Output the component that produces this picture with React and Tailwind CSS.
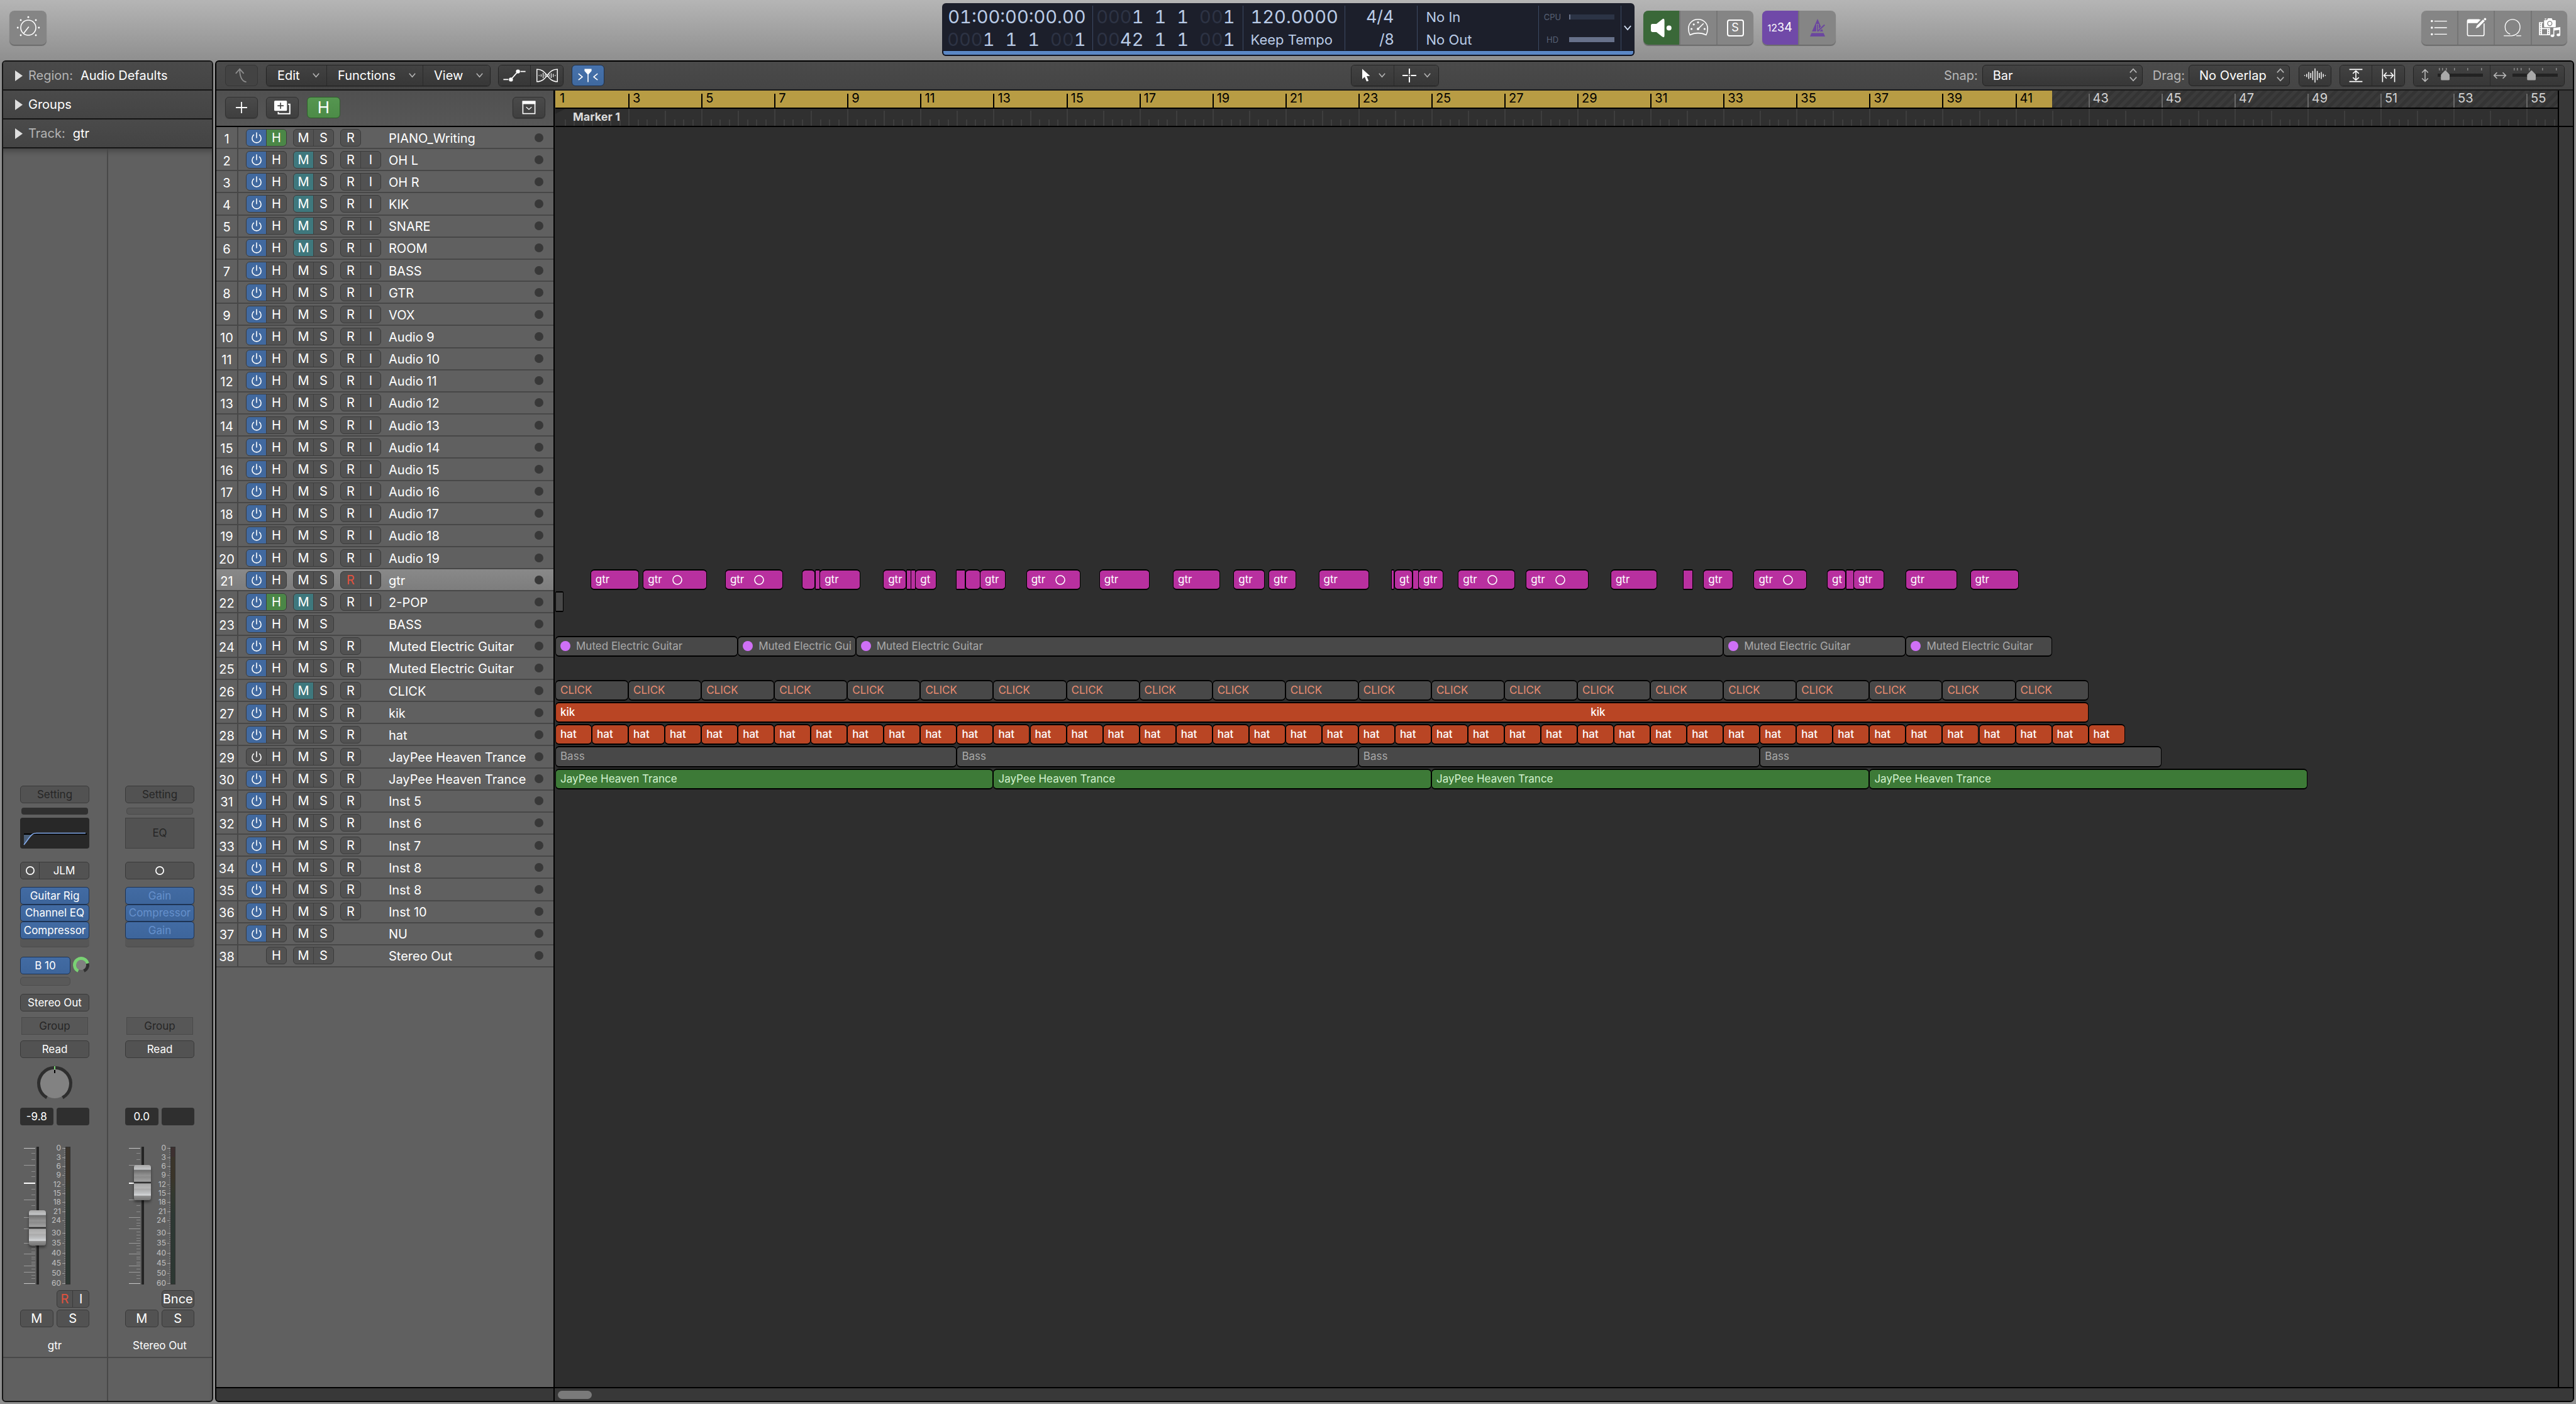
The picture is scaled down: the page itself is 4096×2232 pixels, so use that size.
import React from "react";

/* ---------- session data ---------- */

const BARS_VISIBLE = 54.86;
const pct = (bars) => `${(bars / BARS_VISIBLE) * 100}%`;

const tracks = [
  { name: "PIANO_Writing", hide: true, rec: true },
  { name: "OH L", mute: true, rec: true, input: true },
  { name: "OH R", mute: true, rec: true, input: true },
  { name: "KIK", mute: true, rec: true, input: true },
  { name: "SNARE", mute: true, rec: true, input: true },
  { name: "ROOM", mute: true, rec: true, input: true },
  { name: "BASS", rec: true, input: true },
  { name: "GTR", rec: true, input: true },
  { name: "VOX", rec: true, input: true },
  { name: "Audio 9", rec: true, input: true },
  { name: "Audio 10", rec: true, input: true },
  { name: "Audio 11", rec: true, input: true },
  { name: "Audio 12", rec: true, input: true },
  { name: "Audio 13", rec: true, input: true },
  { name: "Audio 14", rec: true, input: true },
  { name: "Audio 15", rec: true, input: true },
  { name: "Audio 16", rec: true, input: true },
  { name: "Audio 17", rec: true, input: true },
  { name: "Audio 18", rec: true, input: true },
  { name: "Audio 19", rec: true, input: true },
  { name: "gtr", rec: true, input: true, armed: true, selected: true },
  { name: "2-POP", hide: true, mute: true, rec: true, input: true },
  { name: "BASS" },
  { name: "Muted Electric Guitar", rec: true },
  { name: "Muted Electric Guitar", rec: true },
  { name: "CLICK", mute: true, rec: true },
  { name: "kik", rec: true },
  { name: "hat", rec: true },
  { name: "JayPee Heaven Trance", rec: true, power: "off" },
  { name: "JayPee Heaven Trance", rec: true },
  { name: "Inst 5", rec: true },
  { name: "Inst 6", rec: true },
  { name: "Inst 7", rec: true },
  { name: "Inst 8", rec: true },
  { name: "Inst 8", rec: true },
  { name: "Inst 10", rec: true },
  { name: "NU" },
  { name: "Stereo Out", power: "none" },
];

/* [start, end, label, stereo] with positions counted in bars from bar 1 */
const gtrRegions = [
  [0.96, 2.3, "gtr"], [2.4, 4.155, "gtr", true], [4.65, 6.24, "gtr", true],
  [6.75, 7.11], [7.11, 7.26], [7.24, 8.365, "gtr"],
  [8.98, 9.62, "gtr"], [9.62, 9.75], [9.74, 9.88], [9.86, 10.44, "gt"],
  [10.98, 11.24], [11.24, 11.65], [11.63, 12.335, "gtr"],
  [12.9, 14.38, "gtr", true], [14.9, 16.28, "gtr"], [16.92, 18.215, "gtr"],
  [18.58, 19.43, "gtr"], [19.54, 20.29, "gtr"], [20.91, 22.3, "gtr"],
  [22.9, 22.99], [22.985, 23.48, "gt"], [23.48, 23.65], [23.64, 24.33, "gtr"],
  [24.73, 26.29, "gtr", true], [26.59, 28.31, "gtr", true], [28.91, 30.19, "gtr"],
  [30.9, 31.175], [31.45, 32.27, "gtr"], [32.83, 34.29, "gtr", true],
  [34.84, 35.36, "gt"], [35.36, 35.58], [35.56, 36.415, "gtr"],
  [36.99, 38.4, "gtr"], [38.76, 40.1, "gtr"],
].map(([start, end, label, stereo]) => ({ start, end, label, stereo, kind: "magenta" }));

const series = (count, length, label, kind) =>
  Array.from({ length: count }, (_, i) => ({ start: i * length, end: (i + 1) * length, label, kind }));

const lanes = {
  20: gtrRegions,
  21: [{ start: 0, end: 0.23, kind: "gray" }],
  23: [[0, 5], [5, 8.23, "Muted Electric Gui"], [8.23, 32], [32, 37], [37, 41]].map(([start, end, label]) => ({
    start, end, label: label || "Muted Electric Guitar", kind: "gray", bullet: true,
  })),
  25: series(21, 2, "CLICK", "click"),
  26: [{ start: 0, end: 42, label: "kik", kind: "orange", repeatAt: 28.25 }],
  27: series(43, 1, "hat", "orange"),
  28: series(4, 11, "Bass", "gray"),
  29: series(4, 12, "JayPee Heaven Trance", "green"),
};

const regionLook = {
  magenta: "bg-[#b8309f] text-white",
  gray: "bg-[#484848] text-[#a9a9a9]",
  click: "bg-[#484848] text-[#e88b70]",
  orange: "bg-[#b94524] text-white font-medium",
  green: "bg-[#3d7a37] text-[#d3f2cf]",
};

/* ---------- small parts ---------- */

const darkFace = "flex items-center bg-gradient-to-b from-[#424242] to-[#373737] text-white";
const darkButton = `${darkFace} justify-center`;
const menuButton = `${darkFace} justify-between pr-[11px] pl-[17px]`;
const darkGroup = "flex h-[34px] rounded-md border border-[#242424] shadow-[0_1px_1px_rgba(0,0,0,0.3)] overflow-hidden";

function Icon({ box, className, children, ...rest }) {
  return (
    <svg viewBox={box} className={className} fill="none" stroke="currentColor" aria-hidden="true" overflow="visible" {...rest}>
      {children}
    </svg>
  );
}

const ChevronDown = ({ className }) => (
  <Icon box="0 0 14 10" className={className} strokeWidth="2">
    <path d="M1 1 L7 8 L13 1" />
  </Icon>
);

const Stepper = () => (
  <Icon box="0 0 15 25" className="pointer-events-none absolute top-[6px] right-[9px] h-5 w-3 text-[#b4b4b4]" strokeWidth="2">
    <path d="M1 8 L7.500 1 L14 8 M1 17 L7.500 24 L14 17" />
  </Icon>
);

const PowerIcon = () => (
  <Icon box="0 0 24 24" className="h-5 w-5" strokeWidth="1.900" strokeLinecap="round">
    <path d="M12 2.500 V12" />
    <path d="M6.500 6.500 A8.500 8.500 0 1 0 17.500 6.500" />
  </Icon>
);

/* ---------- control bar ---------- */

function Digits({ dim, lit }) {
  return (
    <span>
      {dim && <span className="text-[#2d3344]">{dim}</span>}
      {lit}
    </span>
  );
}

const PositionRow = ({ first, firstDim }) => (
  <div className="flex justify-end gap-[17px] tabular-nums">
    <Digits dim={firstDim} lit={first} />
    <Digits lit="1" />
    <Digits lit="1" />
    <Digits dim="00" lit="1" />
  </div>
);

function Lcd() {
  const col = "flex flex-col justify-between border-r border-[#3c4a63] leading-[36px]";
  return (
    <section aria-label="LCD display" className="mt-[5px] flex h-[84px] w-[1101px] flex-col overflow-hidden rounded-md bg-[#1c1f2b] text-[29px] text-[#b9cbe6]">
      <div className="flex h-[75px] pt-1">
        <div className={`${col} w-[240px] pr-[10px]`}>
          <div className="text-right tabular-nums">01:00:00:00.00</div>
          <PositionRow firstDim="000" first="1" />
        </div>
        <div className={`${col} w-[239px] pr-3`}>
          <PositionRow firstDim="000" first="1" />
          <PositionRow firstDim="00" first="42" />
        </div>
        <div className={`${col} w-[162px] pl-3`}>
          <div className="tabular-nums">120.0000</div>
          <div className="text-[22px] leading-[36px]">Keep Tempo</div>
        </div>
        <div className={`${col} w-[115px] pr-9 text-right`}>
          <div className="text-[27px]">4/4</div>
          <div className="text-2xl leading-[36px]">/8</div>
        </div>
        <div className={`${col} w-[193px] pl-[14px] text-[22px]`}>
          <div>No In</div>
          <div>No Out</div>
        </div>
        <div className={`${col} w-[131px] gap-0 pl-2 text-[13px] text-[#596276]`}>
          <div className="flex items-center gap-3">
            <span className="w-7 text-center">CPU</span>
            <span className="h-2 w-[72px] border-l-2 border-[#6a748c] bg-[#2b3345]" />
          </div>
          <div className="flex items-center gap-3">
            <span className="w-7 text-center">HD</span>
            <span className="h-2 w-[72px] bg-[#67718a]" />
          </div>
        </div>
        <button type="button" aria-label="Display mode" className="flex flex-1 items-center justify-center text-[#d5e2f5]">
          <ChevronDown className="h-[9px] w-3" />
        </button>
      </div>
      <div className="flex-1 rounded-b-md border-2 border-t border-[#0f1220] bg-[#5b87c5]" />
    </section>
  );
}

const barGroup = "mt-[17px] flex h-[54px] overflow-hidden rounded-lg bg-[#858585] text-white shadow-[0_2px_1px_rgba(0,0,0,0.3)]";

function ControlBar() {
  return (
    <header className="grid h-24 grid-cols-[1fr_auto_1fr]">
      <div className="pl-[15px]">
        <button type="button" aria-label="Smart controls" className={`${barGroup} w-[59px] items-center justify-center`}>
          <Icon box="0 0 50 50" className="h-10 w-10" strokeWidth="2">
            <circle cx="25" cy="25" r="15" />
            <path d="M26 23 L16 36" />
            <g fill="currentColor" stroke="none">
              <circle cx="25" cy="4" r="1.800" /><circle cx="4" cy="25" r="1.800" /><circle cx="46" cy="25" r="1.800" />
              <circle cx="10" cy="10" r="1.800" /><circle cx="40" cy="10" r="1.800" /><circle cx="10" cy="40" r="1.800" /><circle cx="40" cy="40" r="1.800" />
            </g>
          </Icon>
        </button>
      </div>
      <Lcd />
      <div className="flex gap-[14px] pr-[14px] pl-[14px]">
        <div className={`${barGroup} w-[175px]`}>
          <button type="button" aria-label="Monitor" className="flex flex-1 items-center justify-center bg-[#3a6838]">
            <Icon box="0 0 40 36" className="h-[29px] w-8" fill="currentColor" stroke="none">
              <path d="M3 10 H11 L22 1 Q27 -3 27 4 V32 Q27 39 22 35 L11 26 H3 Q0 26 0 23 V13 Q0 10 3 10 Z" />
              <circle cx="36" cy="18" r="5" />
            </Icon>
          </button>
          <button type="button" aria-label="Low latency mode" className="flex flex-1 items-center justify-center border-l-2 border-[#757575]">
            <Icon box="0 0 40 35" className="h-7 w-8" strokeWidth="2">
              <path d="M4 32 C1 27 1 22 1 19 C1 9 9 1 20 1 C31 1 39 9 39 19 C39 22 39 27 36 32 C27 27 13 27 4 32 Z" />
              <path d="M20 20 L31 9" />
              <g fill="currentColor" stroke="none">
                <circle cx="20" cy="20" r="2.500" /><circle cx="7" cy="20" r="2" /><circle cx="11.500" cy="11" r="2" />
                <circle cx="20" cy="7" r="2" /><circle cx="33" cy="20" r="2" />
              </g>
            </Icon>
          </button>
          <button type="button" aria-label="Solo mode" className="flex flex-1 items-center justify-center border-l-2 border-[#757575]">
            <span className="flex h-[27px] w-[27px] items-center justify-center rounded border-2 border-white text-lg leading-none">S</span>
          </button>
        </div>
        <div className={`${barGroup} w-[117px]`}>
          <button type="button" className="flex flex-1 items-baseline justify-center bg-[#7049a8] leading-[52px]">
            <span className="text-[14px]">1</span>
            <span className="text-[16px]">2</span>
            <span className="text-[18px]">3</span>
            <span className="text-[20px]">4</span>
          </button>
          <button type="button" aria-label="Metronome" className="flex flex-1 items-center justify-center border-l-2 border-[#757575] text-[#6b469f]">
            <Icon box="0 0 30 35" className="h-7 w-6" fill="currentColor" stroke="none">
              <path d="M15 0 L26 25 H4 Z" />
              <path d="M15 10 V25 M13 27 L29 12" stroke="#858585" strokeWidth="5" />
              <path d="M15 11 V24" stroke="#6b469f" strokeWidth="2" />
              <path d="M15 25 L29 12" stroke="#6b469f" strokeWidth="2.500" />
              <path d="M3 28 H27 L30 35 H0 Z" />
            </Icon>
          </button>
        </div>
        <div className={`${barGroup} ml-auto w-[232px]`}>
          <button type="button" aria-label="List editors" className="flex flex-1 items-center justify-center">
            <Icon box="687 45 120 120" className="h-8 w-8" strokeWidth="5">
              <path d="M720 66 H795 M720 105 H795 M720 144 H795" />
              <g fill="currentColor" stroke="none">
                <circle cx="705" cy="66" r="6.500" /><circle cx="705" cy="105" r="6.500" /><circle cx="705" cy="144" r="6.500" />
              </g>
            </Icon>
          </button>
          <button type="button" aria-label="Note pads" className="flex flex-1 items-center justify-center border-l-2 border-[#757575]">
            <Icon box="906 45 120 120" className="h-8 w-8" strokeWidth="6">
              <path d="M1014 80 V144 Q1014 153 1005 153 H924 Q915 153 915 144 V66 Q915 57 924 57 H985" />
              <path d="M914 56 H994 L974 78 H914 Z" fill="currentColor" stroke="none" />
              <path d="M964 110 L972 92 L1008 56 L1018 66 L982 102 Z" fill="currentColor" stroke="none" />
              <circle cx="1020" cy="54" r="7" fill="currentColor" stroke="none" />
            </Icon>
          </button>
          <button type="button" aria-label="Loop browser" className="flex flex-1 items-center justify-center border-l-2 border-[#757575]">
            <Icon box="1120 45 120 120" className="h-8 w-8" strokeWidth="5">
              <path d="M1128 153 H1176 C1206 150 1225 128 1225 100 A44.500 44.500 0 1 0 1136 100 C1136 122 1148 137 1166 144" />
              <path d="M1203 153 H1232" />
            </Icon>
          </button>
          <button type="button" aria-label="Browsers" className="flex flex-1 items-center justify-center border-l-2 border-[#757575]">
            <Icon box="1335 45 120 120" className="h-8 w-8" strokeWidth="5">
              <path d="M1332 72 H1356 V78 H1350 V107 H1398 V150 H1332 Z M1350 113 V144 H1380 V113 Z" fill="currentColor" stroke="none" fillRule="evenodd" />
              <path d="M1341 78 V148 M1389 113 V148" stroke="#858585" strokeWidth="5" strokeDasharray="6 6" />
              <path d="M1366 60 H1380 L1385 49 H1408 L1413 60 H1428 Q1432 60 1432 64 V98 Q1432 102 1428 102 H1366 Q1362 102 1362 98 V64 Q1362 60 1366 60 Z M1366 51 H1376 V56 H1366 Z" fill="currentColor" stroke="none" />
              <circle cx="1396" cy="80" r="13" stroke="#858585" strokeWidth="5" />
              <path d="M1417 107 L1459 101 V147 H1453 V118 L1423 122 V154 H1417 Z" fill="currentColor" stroke="none" />
              <ellipse cx="1412" cy="153" rx="11" ry="8" fill="currentColor" stroke="none" />
              <ellipse cx="1448" cy="148" rx="11" ry="8" fill="currentColor" stroke="none" />
            </Icon>
          </button>
        </div>
      </div>
    </header>
  );
}

/* ---------- inspector ---------- */

function InspectorRow({ label, value, strong }) {
  return (
    <button type="button" className="flex h-[46px] w-full items-center border-b-2 border-[#161616] bg-gradient-to-b from-[#4a4a4a] to-[#444444] pl-[19px] text-xl text-white">
      <Icon box="0 0 12 17" className="mr-[9px] h-[17px] w-3 text-[#dedede]" fill="currentColor" stroke="none">
        <path d="M0 0 L12 8.500 L0 17 Z" />
      </Icon>
      <span className={`mr-3 ${strong ? "text-white" : "text-[#b4b4b4]"}`}>{label}</span>
      {value && <span>{value}</span>}
    </button>
  );
}

const slot = "flex h-7 w-full items-center justify-center rounded-[5px] border border-[#3a3a3a] bg-[#525252]";
const blueSlot = "flex w-full items-center justify-center rounded-[5px] border border-[#1e3353] bg-gradient-to-b from-[#426ba3] to-[#3d659b]";

const FADER_TICKS_LONG = [390, 560, 649, 704, 774, 828, 888, 918];
const FADER_TICKS_SHORT = [331, 360, 420, 446, 506, 535, 589, 619, 659, 674, 689, 719, 734, 749, 764, 789, 803, 818, 843, 853, 868, 878, 903, 933, 948];
const METER_SCALE = [[0, 306], [3, 351], [6, 395], [9, 440], [12, 485], [15, 530], [18, 574], [21, 619], [24, 664], [30, 724], [35, 774], [40, 824], [45, 874], [50, 923], [60, 973]];
const scaleY = (v) => Math.round((v - 299) * 0.3214);

function Fader({ label, value, red }) {
  return (
    <div className="mt-[34px] flex h-[219px] pl-[6px]">
      <svg className="h-[219px] w-[18px]" aria-hidden="true">
        {FADER_TICKS_SHORT.map((y) => <rect key={y} x="12" y={scaleY(y)} width="6" height="1" fill="#8c8c8c" />)}
        {FADER_TICKS_LONG.map((y) => <rect key={y} x="0" y={scaleY(y)} width="18" height="1" fill="#9c9c9c" />)}
        {[306, 973].map((y) => <rect key={y} x="0" y={scaleY(y)} width="18" height="1" fill="#c8c8c8" />)}
        <rect x="0" y={scaleY(475)} width="18" height="2" fill="#ffffff" />
      </svg>
      <input
        type="range"
        aria-label={label}
        defaultValue={value}
        className="relative z-10 -ml-[10px] h-[219px] w-[27px] appearance-none bg-[linear-gradient(#242424,#242424)] bg-[length:4px_100%] bg-center bg-no-repeat [direction:rtl] [writing-mode:vertical-lr] [&::-webkit-slider-thumb]:h-14 [&::-webkit-slider-thumb]:w-[27px] [&::-webkit-slider-thumb]:appearance-none [&::-webkit-slider-thumb]:rounded-sm [&::-webkit-slider-thumb]:bg-[linear-gradient(#a8a8a8_0%,#c4c6c8_13%,#6c6c6c_14%,#949494_30%,#8a8a8a_34%,#a2a2a2_47%,#303030_48%,#303030_52%,#a8a8a8_53%,#b8b8b8_66%,#a9a9a9_68%,#bfc1c3_80%,#d6d8da_86%,#8f8f8f_88%,#747474_100%)] [&::-webkit-slider-thumb]:shadow-[0_3px_4px_rgba(0,0,0,0.45)]"
      />
      <svg className="h-[219px] w-[31px]" overflow="visible" aria-hidden="true">
        {METER_SCALE.map(([db, y]) => (
          <g key={db}>
            <text x="24" y={scaleY(y) + 4} textAnchor="end" fontSize="12" fill="#c0c0c0">{db}</text>
            <rect x="26" y={scaleY(y)} width="5" height="1" fill="#a0a0a0" />
          </g>
        ))}
        <path d="M30 3 V217" stroke="#888888" strokeWidth="2" strokeDasharray="1 2" />
      </svg>
      <div className={`h-[219px] w-2 border border-[#303030] ${red ? "bg-[linear-gradient(#3d3030_0_7%,#3b352a_7%_22%,#33392f_34%,#2d3833_50%)]" : "bg-[linear-gradient(#3b342b_0_22%,#33392f_34%,#2d3833_50%)]"}`} />
    </div>
  );
}

function Strip({ name, output }) {
  const dimSlot = "flex h-7 items-center justify-center border border-[#4a4a4a] bg-[#575757] text-[#262626]";
  return (
    <div className="flex flex-1 flex-col justify-end">
      <div className="flex w-full flex-col pr-[28px] pl-[27px] text-[17px] leading-none text-white">
        <button type="button" className={`${slot} text-[#262626]`}>Setting</button>
        <div className={`mx-[2px] mt-[7px] h-[11px] rounded-sm ${output ? "border border-[#4a4a4a] bg-[#575757]" : "bg-[#303030]"}`} />
        {output ? (
          <button type="button" className="mt-[5px] flex h-[49px] items-center justify-center border border-[#404040] bg-[#525252] text-[#262626]">EQ</button>
        ) : (
          <div className="mt-[5px] h-[49px] rounded-sm bg-[#282828]">
            <svg viewBox="0 0 110 49" className="h-full w-full" fill="none" aria-label="EQ curve">
              <path d="M6 26 H20 C16 28 11 36 6 43 Z" fill="#4b5f78" />
              <path d="M6 26 H106" stroke="#000000" strokeWidth="2" />
              <path d="M6 43 C12 36 16 28 20 26 Q22 24.500 26 24.500 H104" stroke="#86aef0" strokeWidth="1.500" />
            </svg>
          </div>
        )}
        <div className={`${slot} mt-[21px]`}>
          {output ? (
            <Icon box="0 0 16 16" className="h-[14px] w-[14px]" strokeWidth="2"><circle cx="8" cy="8" r="7" /></Icon>
          ) : (
            <>
              <button type="button" aria-label="Input format" className="flex h-full w-[30px] items-center justify-center border-r border-[#3a3a3a]">
                <Icon box="0 0 16 16" className="h-[14px] w-[14px]" strokeWidth="2"><circle cx="8" cy="8" r="7" /></Icon>
              </button>
              <button type="button" className="h-full flex-1">JLM</button>
            </>
          )}
        </div>
        <div className={`mt-3 flex flex-col rounded-[5px] border-b border-[#4a4a4a] bg-[#565656] ${output ? "text-[#6590cc]" : "text-white"}`}>
          {(output ? ["Gain", "Compressor", "Gain"] : ["Guitar Rig", "Channel EQ", "Compressor"]).map((fx, i) => (
            <button key={i} type="button" className={`${blueSlot} ${i === 1 ? "h-[27px]" : "h-7"}`}>{fx}</button>
          ))}
          <div className="h-3" />
        </div>
        {output ? (
          <div className="h-[111px]" />
        ) : (
          <>
            <div className="mt-[15px] flex h-7 justify-between">
              <button type="button" className={`${blueSlot} max-w-[80px]`}>B 10</button>
              <Icon box="0 0 26 26" className="h-[26px] w-[26px]" strokeWidth="5">
                <circle cx="13" cy="13" r="8" fill="#808080" stroke="none" />
                <path d="M8.500 22.500 A10.500 10.500 0 1 1 23.300 10.700" stroke="#7ad274" />
                <path d="M23.300 10.700 A10.500 10.500 0 0 1 17.500 22.500" stroke="#303030" />
              </Icon>
            </div>
            <div className="mt-1 h-[14px] w-20 rounded-[5px] border border-[#4e4e4e] bg-[#595959]" />
            <button type="button" className={`${slot} mt-[13px] mb-[9px]`}>Stereo Out</button>
          </>
        )}
        <button type="button" className={`${dimSlot} mx-[2px]`}>Group</button>
        <button type="button" className={`${slot} mt-[9px]`}>Read</button>
        {output ? (
          <div className="h-[79px]" />
        ) : (
          <Icon box="0 0 56 56" className="mx-auto mt-[13px] mb-[10px] h-14 w-14">
            <circle cx="28" cy="28" r="23" fill="#828282" stroke="none" />
            <path d="M15.500 50 A25.500 25.500 0 1 1 40.500 50" stroke="#2e2e2e" strokeWidth="5" />
            <path d="M28 0 V5" stroke="#7ad274" strokeWidth="2" />
            <path d="M28 6 V11" stroke="#000000" strokeWidth="2" />
          </Icon>
        )}
        <div className="grid grid-cols-2 gap-[5px]">
          <div className="flex h-7 items-center justify-center rounded-sm bg-[#2f2f2f]">{output ? "0.0" : "-9.8"}</div>
          <div className="h-7 rounded-sm bg-[#2f2f2f]" />
        </div>
        <Fader label={`${name} volume`} value={output ? 82 : 38} red={output} />
        <div className="mt-[9px] grid grid-cols-2 gap-x-[5px] gap-y-[3px] text-xl leading-none">
          {output ? (
            <button type="button" className={`${slot} col-start-2`}>Bnce</button>
          ) : (
            <div className={`${slot} col-start-2`}>
              <button type="button" className="h-full flex-1 border-r border-[#3a3a3a] text-[#e0523f]">R</button>
              <button type="button" className="h-full flex-1">I</button>
            </div>
          )}
          <button type="button" className={slot}>M</button>
          <button type="button" className={slot}>S</button>
        </div>
        <div className="mt-[17px] mb-[6px] text-center leading-6 whitespace-nowrap">{name}</div>
      </div>
      <div className="h-[70px] border-t-2 border-[#484848]" />
    </div>
  );
}

function Inspector() {
  return (
    <aside className="flex w-[336px] flex-col overflow-hidden rounded-md border-2 border-[#161616] bg-[#606060]">
      <InspectorRow label="Region:" value="Audio Defaults" />
      <InspectorRow label="Groups" strong />
      <InspectorRow label="Track:" value="gtr" />
      <div className="flex flex-1 shadow-[inset_0_10px_10px_-6px_rgba(0,0,0,0.3)]">
        <Strip name="gtr" />
        <div className="w-[2px] bg-[#484848]" />
        <Strip name="Stereo Out" output />
      </div>
    </aside>
  );
}

/* ---------- tracks area ---------- */

function ZoomSlider({ label, value, ticks, children }) {
  return (
    <label className="flex flex-1 items-center gap-2 bg-gradient-to-b from-[#424242] to-[#373737] pl-[6px] text-[#b8b8b8] last:border-l last:border-[#2a2a2a] last:pl-[3px]">
      {children}
      <span className="relative flex h-full w-[72px] items-center">
        <svg viewBox="0 0 72 4" className="absolute top-1 left-0 h-1 w-[72px]" fill="#8a8a8a" aria-hidden="true">
          {ticks.map((x) => <rect key={x} x={x} y="0" width="1.500" height="4" />)}
        </svg>
        <input
          type="range"
          aria-label={label}
          defaultValue={value}
          className="h-4 w-full appearance-none bg-[linear-gradient(#222,#222)] bg-[length:100%_5px] bg-center bg-no-repeat [&::-webkit-slider-thumb]:h-4 [&::-webkit-slider-thumb]:w-[14px] [&::-webkit-slider-thumb]:appearance-none [&::-webkit-slider-thumb]:rounded-[2px] [&::-webkit-slider-thumb]:bg-[#a9a9a9] [&::-webkit-slider-thumb]:[clip-path:polygon(50%_0,100%_45%,100%_100%,0_100%,0_45%)]"
        />
      </span>
    </label>
  );
}

function MenuBar() {
  const chevron = "h-2 w-[11px] text-[#b4b4b4]";
  return (
    <div className="grid h-[46px] grid-cols-[1fr_auto_1fr] items-center border-b-2 border-[#1a1a1a] bg-gradient-to-b from-[#4a4a4a] to-[#454545] pr-[13px] pb-[1px] pl-[14px] text-xl">
      <div className="flex items-center">
        <button type="button" aria-label="Back" className="flex h-[34px] w-[52px] items-center justify-center rounded-md border border-[#363636] bg-[#434343] text-[#8e8e8e]">
          <Icon box="0 0 25 30" className="h-6 w-5" strokeWidth="2.200"><path d="M22 28 C13 26 9 16 9 3 M1 11 L9 2 L17 11" /></Icon>
        </button>
        <div className={`${darkGroup} ml-[13px]`}>
          <button type="button" className={`${menuButton} w-24 border-r border-[#2a2a2a]`}>Edit<ChevronDown className={chevron} /></button>
          <button type="button" className={`${menuButton} w-[153px] border-r border-[#2a2a2a]`}>Functions<ChevronDown className={chevron} /></button>
          <button type="button" className={`${menuButton} w-[106px]`}>View<ChevronDown className={chevron} /></button>
        </div>
        <div className={`${darkGroup} ml-3`}>
          <button type="button" aria-label="Show automation" className={`${darkButton} w-[51px] border-r border-[#2a2a2a]`}>
            <Icon box="111 48 150 90" className="h-6 w-10" strokeWidth="6">
              <path d="M120 117 H150 M165 117 L207 69 M222 69 H252" />
              <circle cx="165" cy="117" r="12" fill="currentColor" stroke="none" /><circle cx="207" cy="69" r="12" fill="currentColor" stroke="none" />
            </Icon>
          </button>
          <button type="button" aria-label="Show flex" className={`${darkButton} w-[51px]`}>
            <Icon box="306 48 150 90" className="h-6 w-10" strokeWidth="5.500">
              <path d="M320 56 C352 56 366 74 381 93 C396 112 410 130 442 130 V56 C410 56 396 74 381 93 C366 112 352 130 320 130 Z" />
              <path d="M333 90 V96 M345 86 V100 M357 77 V109 M369 86 V100 M393 86 V100 M405 80 V108 M417 84 V102 M429 90 V96" strokeWidth="4.500" />
            </Icon>
          </button>
        </div>
        <button type="button" aria-label="Catch playhead" className="ml-[13px] flex h-[34px] w-[52px] items-center justify-center rounded-md border border-[#1f2f47] bg-gradient-to-b from-[#4772ac] to-[#3f699f] text-white">
          <Icon box="552 48 150 90" className="h-6 w-10" strokeWidth="6">
            <path d="M606 54 H648 V66 L630 86 H624 L606 66 Z" fill="currentColor" stroke="none" />
            <path d="M627 80 V132 M570 82 L593 101 L570 120 M684 82 L661 101 L684 120" />
          </Icon>
        </button>
      </div>

      <div className={darkGroup}>
        <button type="button" aria-label="Left-click tool" className={`${darkButton} w-[68px] gap-3 border-r border-[#2a2a2a] pl-1`}>
          <Icon box="0 0 18 26" className="h-[21px] w-[14px]" fill="currentColor" stroke="none"><path d="M0 0 V21 L5 16.500 L9 26 L13 24.500 L9 15 L16 14.500 Z" /></Icon>
          <ChevronDown className={chevron} />
        </button>
        <button type="button" aria-label="Command-click tool" className={`${darkButton} w-[70px] gap-3`}>
          <Icon box="0 0 28 28" className="h-[22px] w-[22px]" strokeWidth="2.500"><path d="M14 0 V11 M14 17 V28 M0 14 H11 M17 14 H28 M14 13 V15" /></Icon>
          <ChevronDown className={chevron} />
        </button>
      </div>

      <div className="flex items-center justify-end">
        <label htmlFor="snap" className="pr-[7px] text-[#b8b8b8]">Snap:</label>
        <div className="relative">
          <select id="snap" className="block h-[34px] w-[255px] appearance-none rounded-md border border-[#242424] bg-gradient-to-b from-[#424242] to-[#373737] pl-4 text-white"><option>Bar</option></select>
          <Stepper />
        </div>
        <label htmlFor="drag" className="pr-[6px] pl-[16px] text-[#b8b8b8]">Drag:</label>
        <div className="relative">
          <select id="drag" className="block h-[34px] w-[161px] appearance-none rounded-md border border-[#242424] bg-gradient-to-b from-[#424242] to-[#373737] pl-4 text-white"><option>No Overlap</option></select>
          <Stepper />
        </div>
        <div className={`${darkGroup} ml-[14px]`}>
          <button type="button" aria-label="Waveform zoom" className={`${darkButton} w-[50px]`}>
            <Icon box="0 0 45 30" className="h-6 w-9" strokeWidth="1.800">
              <path d="M2 14 V16 M6 12 V18 M10 8 V22 M14 10 V20 M18 6 V24 M22.500 1 V29 M27 6 V24 M31 10 V20 M35 8 V22 M39 12 V18 M43 14 V16" />
            </Icon>
          </button>
        </div>
        <div className={`${darkGroup} ml-[13px]`}>
          <button type="button" aria-label="Fit vertically" className={`${darkButton} w-[51px] border-r border-[#2a2a2a]`}>
            <Icon box="204 348 90 90" className="h-6 w-6" strokeWidth="6"><path d="M210 357 H288 M210 429 H288 M249 366 V420 M231 381 L249 365 L267 381 M231 405 L249 421 L267 405" /></Icon>
          </button>
          <button type="button" aria-label="Fit horizontally" className={`${darkButton} w-[51px]`}>
            <Icon box="396 348 90 90" className="h-6 w-6" strokeWidth="6"><path d="M405 354 V432 M477 354 V432 M414 393 H468 M429 375 L413 393 L429 411 M453 375 L469 393 L453 411" /></Icon>
          </button>
        </div>
        <div className={`${darkGroup} ml-[13px] w-[241px]`}>
          <ZoomSlider label="Vertical zoom" value={9} ticks={[2, 7, 13, 26, 47, 69]}>
            <Icon box="612 348 90 90" className="h-6 w-6 shrink-0" strokeWidth="6"><path d="M657 358 V428 M639 376 L657 358 L675 376 M639 410 L657 428 L675 410" /></Icon>
          </ZoomSlider>
          <ZoomSlider label="Horizontal zoom" value={41} ticks={[2, 7, 13, 26, 47, 69]}>
            <Icon box="1056 348 90 90" className="h-6 w-6 shrink-0" strokeWidth="6"><path d="M1066 393 H1136 M1084 375 L1066 393 L1084 411 M1118 375 L1136 393 L1118 411" /></Icon>
          </ZoomSlider>
        </div>
      </div>
    </div>
  );
}

const headButton = "flex h-[34px] w-[52px] items-center justify-center rounded-md border border-[#303030] bg-gradient-to-b from-[#4a4a4a] to-[#3f3f3f] text-white shadow-[0_1px_1px_rgba(0,0,0,0.3)]";

function TrackListHeader() {
  return (
    <div className="flex h-14 items-start bg-gradient-to-b from-[#505050] to-[#575757] pt-[10px] pr-[13px] pl-[14px]">
      <button type="button" aria-label="Add track" className={headButton}>
        <Icon box="0 0 22 22" className="h-[18px] w-[18px]" strokeWidth="2.200"><path d="M11 0 V22 M0 11 H22" /></Icon>
      </button>
      <button type="button" aria-label="Duplicate track" className={`${headButton} ml-[13px]`}>
        <Icon box="0 0 32 27" className="h-[22px] w-[26px]" strokeWidth="2.500">
          <rect x="0" y="0" width="25" height="20" rx="2" fill="currentColor" stroke="none" />
          <path d="M12.500 4 V16 M6.500 10 H18.500" stroke="#454545" strokeWidth="2" />
          <path d="M27 7 H30.500 V25.500 H8 V22" />
        </Icon>
      </button>
      <button type="button" className="ml-[13px] flex h-[34px] w-[53px] items-center justify-center rounded-md border border-[#2f5a2c] bg-gradient-to-b from-[#559650] to-[#4c8b47] text-[26px] leading-none text-white">H</button>
      <button type="button" aria-label="Track header options" className={`${headButton} ml-auto`}>
        <Icon box="228 234 90 90" className="h-6 w-6" strokeWidth="6">
          <rect x="237" y="243" width="72" height="72" /><path d="M234 249 H312" strokeWidth="18" /><path d="M257 276 L273 290 L289 276" strokeWidth="5" />
        </Icon>
      </button>
    </div>
  );
}

function TrackRow({ track, index }) {
  const { name, power = "on", hide, mute, rec, input, armed, selected } = track;
  const group = "flex h-7 overflow-hidden rounded-md border border-[#3b3b3b] bg-[#525252]";
  const cell = "flex h-full flex-1 items-center justify-center";
  const split = "border-l border-[#3f3f3f]";
  return (
    <li className={`flex items-center border-b-2 border-[#474747] text-xl leading-none text-white ${selected ? "bg-gradient-to-b from-[#898989] to-[#7d7d7d]" : "bg-[#606060]"}`}>
      <span className={`flex h-full w-[35px] items-center justify-center border-r-2 pt-1 ${selected ? "border-transparent" : "border-[#474747]"}`}>{index + 1}</span>
      <div className={`${group} ${power === "none" ? "ml-[44px] w-[33px]" : "ml-3 w-[65px]"}`}>
        {power !== "none" && (
          <button type="button" aria-label="Track on" className={`${cell} ${power === "on" ? "bg-[#41699f]" : ""}`}><PowerIcon /></button>
        )}
        <button type="button" className={`${cell} ${power !== "none" ? split : ""} ${hide ? "bg-[#4b8747]" : ""}`}>H</button>
      </div>
      <div className={`${group} ml-[10px] w-[65px]`}>
        <button type="button" className={`${cell} ${mute ? "bg-[#3f787d]" : ""}`}>M</button>
        <button type="button" className={`${cell} ${split}`}>S</button>
      </div>
      <div className="ml-[10px] flex w-[65px]">
        {rec && (
          <div className={`${group} ${input ? "w-[65px]" : "w-[33px]"}`}>
            <button type="button" className={`${cell} ${armed ? "text-[#e0523f]" : ""}`}>R</button>
            {input && <button type="button" className={`${cell} ${split}`}>I</button>}
          </div>
        )}
      </div>
      <span className="ml-3 flex-1 pt-[2px] whitespace-nowrap">{name}</span>
      <span className="mr-4 h-[14px] w-[14px] rounded-full bg-[#383838]" />
    </li>
  );
}

function Ruler() {
  const bars = Array.from({ length: 55 }, (_, i) => i);
  return (
    <div className="h-[58px] border-b-2 border-black bg-[#303030]">
      <div className="relative h-[27px] overflow-hidden bg-[repeating-linear-gradient(135deg,#343434_0_5px,#3b3b3b_5px_10px)] text-xl leading-[24px] text-[#d4d4d4]">
        <div className="absolute inset-y-0 left-0 bg-[#b89c44]" style={{ width: pct(41) }} />
        {bars.filter((b) => b % 2 === 0).map((b) => (
          <div key={b} className={`absolute top-0 h-full ${b <= 40 ? "text-black" : ""}`} style={{ left: pct(b) }}>
            {b > 0 && <span className={`absolute top-[5px] bottom-0 left-0 w-[2px] ${b <= 40 ? "bg-black" : "bg-[#696969]"}`} />}
            <span className="pl-[7px]">{b + 1}</span>
          </div>
        ))}
      </div>
      <div className="relative h-[29px] overflow-hidden border-t-2 border-black">
        {bars.flatMap((b) => [0, 1, 2, 3].map((q) => {
          const at = b + q / 4;
          const height = q > 0 ? "h-[10px]" : b % 2 ? "h-6" : "h-full";
          return at > 0 && <span key={at} className={`absolute bottom-0 w-[2px] bg-[#3e3e3e] ${height}`} style={{ left: pct(at) }} />;
        }))}
        <svg viewBox="0 0 16 8" className="absolute top-0 left-0 h-2 w-4" aria-hidden="true"><path d="M0 0 H16 L0 8 Z" fill="#262626" /></svg>
        <span className="absolute top-0 left-7 text-lg leading-[26px] font-bold text-[#dcdcdc]">Marker 1</span>
      </div>
    </div>
  );
}

function Region({ region }) {
  const { start, end, label, kind, stereo, bullet, repeatAt } = region;
  const tiny = end - start < 0.3;
  return (
    <div
      className={`absolute top-0 bottom-[2px] flex items-center overflow-hidden border-x border-y-2 border-black ${tiny ? "rounded-[2px]" : "rounded-md pl-[7px]"} ${regionLook[kind]}`}
      style={{ left: pct(start), width: pct(end - start) }}
    >
      {bullet && <span className="mr-[9px] h-4 w-4 shrink-0 rounded-full bg-[#cf70f6]" />}
      <span className="whitespace-nowrap">{label}</span>
      {stereo && (
        <Icon box="0 0 16 16" className="ml-4 h-4 w-4 shrink-0" strokeWidth="1.600"><circle cx="8" cy="8" r="7" /></Icon>
      )}
      {repeatAt && <span className="absolute pl-[7px]" style={{ left: `${(repeatAt / (end - start)) * 100}%` }}>{label}</span>}
    </div>
  );
}

function TracksArea() {
  return (
    <main className="flex min-w-0 flex-1 flex-col overflow-hidden rounded-md border-2 border-black bg-[#2e2e2e]">
      <MenuBar />
      <div className="flex min-h-0 flex-1">
        <div className="flex w-[538px] flex-col border-r-2 border-black bg-[#606060]">
          <TrackListHeader />
          <ol className="grid h-[1338px] auto-rows-fr border-t-2 border-black">
            {tracks.map((t, i) => <TrackRow key={i} track={t} index={i} />)}
          </ol>
        </div>
        <div className="flex min-w-0 flex-1 flex-col border-l border-[#2e2e2e]">
          <Ruler />
          <div className="grid h-[1336px] auto-rows-fr text-[17px] leading-none">
            {tracks.map((_, i) => (
              <div key={i} className="relative">
                {(lanes[i] || []).map((r, n) => <Region key={n} region={r} />)}
              </div>
            ))}
          </div>
        </div>
        <div className="flex w-6 flex-col border-l-2 border-black bg-[#383838]">
          <div className="h-[58px] border-b-2 border-black" />
        </div>
      </div>
      <div className="flex h-[22px] items-center border-t-2 border-black bg-[#383838]">
        <div className="h-full w-[538px] border-r-2 border-black" />
        <div className="ml-[5px] h-[13px] w-[54px] rounded-full bg-[#7a7a7a]" />
      </div>
    </main>
  );
}

export default function App() {
  return (
    <div className="flex h-screen flex-col bg-[#929292] bg-[linear-gradient(#b5b5b5,#8f8f8f_96px)] font-['Inter',sans-serif] select-none">
      <ControlBar />
      <div className="flex min-h-0 flex-1 gap-[3px] px-[3px] pb-[3px]">
        <Inspector />
        <TracksArea />
      </div>
    </div>
  );
}
